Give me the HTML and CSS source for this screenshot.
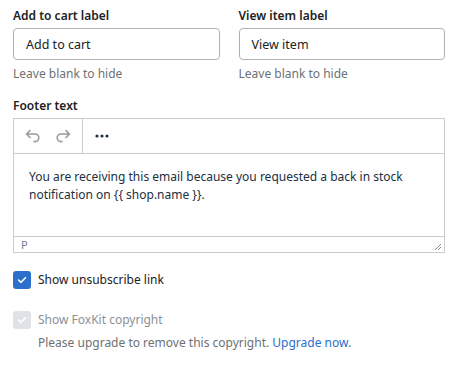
FILE: index.html
```html
<!DOCTYPE html>
<html>
<head>
<meta charset="utf-8">
<link rel="stylesheet" href="styles.css">
</head>
<body>
<div class="page">
  <div class="row">
    <div class="field">
      <div class="label">Add to cart label</div>
      <div class="input">Add to cart</div>
      <div class="help">Leave blank to hide</div>
    </div>
    <div class="field">
      <div class="label">View item label</div>
      <div class="input">View item</div>
      <div class="help">Leave blank to hide</div>
    </div>
  </div>

  <div class="label footer-label">Footer text</div>
  <div class="editor">
    <div class="toolbar">
      <div class="group">
        <span class="tbtn">
          <svg width="16" height="14" viewBox="0 0 16 14"><path d="M5 1.5 L1.5 5 L5 8.5 M1.5 5 H10 A3.8 3.8 0 0 1 10 12.6 H9" fill="none" stroke="#9a9a9a" stroke-width="1.6" stroke-linecap="round" stroke-linejoin="round"/></svg>
        </span>
        <span class="tbtn">
          <svg width="16" height="14" viewBox="0 0 16 14"><path d="M11 1.5 L14.5 5 L11 8.5 M14.5 5 H6 A3.8 3.8 0 0 0 6 12.6 H7" fill="none" stroke="#9a9a9a" stroke-width="1.6" stroke-linecap="round" stroke-linejoin="round"/></svg>
        </span>
      </div>
      <div class="group">
        <span class="tbtn">
          <svg width="16" height="6" viewBox="0 0 16 6"><circle cx="3" cy="3" r="1.6" fill="#222f3e"/><circle cx="8" cy="3" r="1.6" fill="#222f3e"/><circle cx="13" cy="3" r="1.6" fill="#222f3e"/></svg>
        </span>
      </div>
    </div>
    <div class="content">You are receiving this email because you requested a back in stock notification on {{ shop.name }}.</div>
    <div class="status">
      <span class="path">P</span>
      <svg class="grip" width="8" height="8" viewBox="0 0 8 8"><path d="M7 1 L1 7 M7 4 L4 7" stroke="#8a8a8a" stroke-width="1" fill="none"/></svg>
    </div>
  </div>

  <label class="check">
    <span class="box on"><svg width="10" height="8" viewBox="0 0 10 8"><path d="M1.5 4 L4 6.3 L8.5 1.7" fill="none" stroke="#fff" stroke-width="1.6" stroke-linecap="round" stroke-linejoin="round"/></svg></span>
    <span class="ctext">Show unsubscribe link</span>
  </label>

  <label class="check disabled">
    <span class="box off"><svg width="10" height="8" viewBox="0 0 10 8"><path d="M1.5 4 L4 6.3 L8.5 1.7" fill="none" stroke="#fff" stroke-width="1.6" stroke-linecap="round" stroke-linejoin="round"/></svg></span>
    <span class="ctext">Show FoxKit copyright</span>
  </label>
  <div class="note">Please upgrade to remove this copyright. <a class="link">Upgrade now.</a></div>
</div>
</body>
</html>
```

FILE: styles.css
```css
* { box-sizing: border-box; }
html, body { margin: 0; padding: 0; background: #fff; }
body {
  font-family: "Noto Sans", "Open Sans", sans-serif;
  font-size: 12px;
  color: #202223;
}
.page {
  padding: 6px 16px 0 13px;
  width: 461px;
}
.row {
  display: grid;
  grid-template-columns: 1fr 1fr;
  column-gap: 19px;
}
.label {
  font-weight: 600;
  line-height: 20px;
  margin-bottom: 2px;
}
.input {
  height: 32px;
  border: 1px solid #aeb2b6;
  border-radius: 4px;
  padding: 0 12px;
  line-height: 31px;
  font-size: 12.5px;
}
.help {
  color: #6d7175;
  line-height: 20px;
  margin-top: 4px;
}
.footer-label { margin-top: 12px; }
.editor {
  border: 1px solid #ccc;
}
.toolbar {
  display: flex;
  height: 35px;
  border-bottom: 1px solid #ccc;
}
.group {
  display: flex;
  align-items: center;
  padding: 0 4px;
}
.group + .group { border-left: 1px solid #ccc; }
.tbtn {
  width: 30px;
  height: 34px;
  display: flex;
  align-items: center;
  justify-content: center;
}
.content {
  height: 82px;
  padding: 14px 16px 0 15px;
  line-height: 18px;
  color: #222f3e;
}
.status {
  height: 16px;
  border-top: 1px solid #ccc;
  display: flex;
  align-items: center;
  justify-content: space-between;
  padding: 0 2px 0 7px;
  font-size: 11px;
  color: #7a7a9a;
}
.grip { margin-top: 4px; }
.check {
  display: flex;
  align-items: center;
  gap: 7px;
  height: 18px;
  margin-top: 18px;
}
.check.disabled { margin-top: 22px; }
.box {
  width: 18px;
  height: 18px;
  border-radius: 3px;
  display: flex;
  align-items: center;
  justify-content: center;
}
.box.on { background: #2c6ecb; }
.box.off { background: #dfe2e6; }
.ctext { line-height: 20px; }
.disabled .ctext { color: #8c9196; }
.note {
  margin-left: 25px;
  margin-top: 4px;
  line-height: 20px;
  color: #6d7175;
}
.link { color: #2c6ecb; text-decoration: none; }
```
